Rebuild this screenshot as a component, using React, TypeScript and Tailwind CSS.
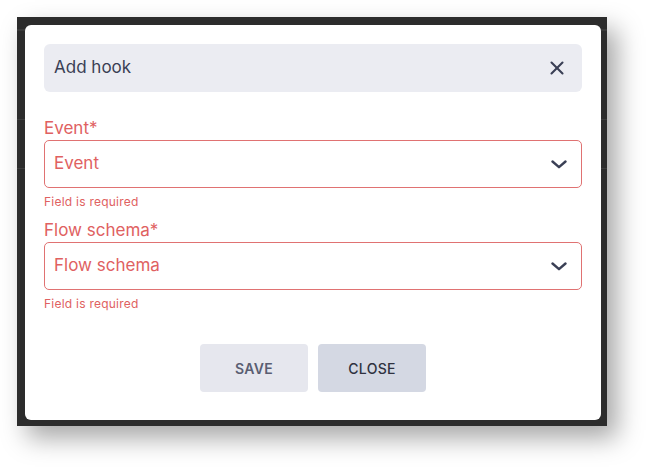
import { X } from "lucide-react";

function Chevron() {
  return (
    <svg width="16" height="9" viewBox="0 0 16 9" fill="none" className="text-[#3a3f55]">
      <polyline points="1.5,1.5 8,7.2 14.5,1.5" stroke="currentColor" strokeWidth="2.4" strokeLinecap="round" strokeLinejoin="round" />
    </svg>
  );
}

function SelectField({ label, placeholder }: { label: string; placeholder: string }) {
  return (
    <div className="flex flex-col">
      <div className="h-6 text-[17px] leading-6 text-[#e06161]">{label}*</div>
      <div className="flex h-12 items-center justify-between rounded-[5px] border border-[#e07272] pl-[9px] pr-[14px]">
        <span className="text-[17px] text-[#e06161]">{placeholder}</span>
        <Chevron />
      </div>
      <div className="mt-[6px] h-4 text-[12px] leading-4 tracking-[0.02em] text-[#e06161]">Field is required</div>
    </div>
  );
}

export default function App() {
  return (
    <div
      className="h-[475px] w-[655px] bg-white pl-[17px] pt-[17px]"
      style={{ fontFamily: "Inter, 'Open Sans', sans-serif" }}
    >
      <div className="relative w-[590px] h-[409px] bg-[#2c2c2c] pl-2 pt-2 pr-[6px] pb-[6px] shadow-[10px_12px_24px_rgba(0,0,0,0.35)]">
        {/* faint rows of the page behind the overlay */}
        <div className="absolute left-0 right-0 top-[12px] h-[2px] bg-[#3a3a3a]" />
        <div className="absolute left-0 right-0 top-[102px] h-px bg-[#3d3d3d]" />
        <div className="absolute left-0 right-0 top-[151px] h-px bg-[#3d3d3d]" />
        <div className="relative flex h-full flex-col rounded-md bg-white px-[19px] pt-[19px]">
          <div className="flex h-12 items-center justify-between rounded-md bg-[#ebecf2] pl-[10px] pr-[14px]">
            <span className="text-[17px] text-[#3a3f55]">Add hook</span>
            <X className="h-[22px] w-[22px] text-[#3a3f55]" strokeWidth={2.3} />
          </div>
          <div className="mt-6">
            <SelectField label="Event" placeholder="Event" />
          </div>
          <div className="mt-2">
            <SelectField label="Flow schema" placeholder="Flow schema" />
          </div>
          <div className="mt-8 flex justify-center gap-[10px]">
            <button className="h-12 w-[108px] rounded-[4px] bg-[#e6e7ee] text-[14px] font-semibold tracking-[0.02em] text-[#5a5e72]">
              SAVE
            </button>
            <button className="h-12 w-[108px] rounded-[4px] bg-[#d4d8e3] text-[14px] font-medium tracking-[0.02em] text-[#2f3240]">
              CLOSE
            </button>
          </div>
        </div>
      </div>
    </div>
  );
}
